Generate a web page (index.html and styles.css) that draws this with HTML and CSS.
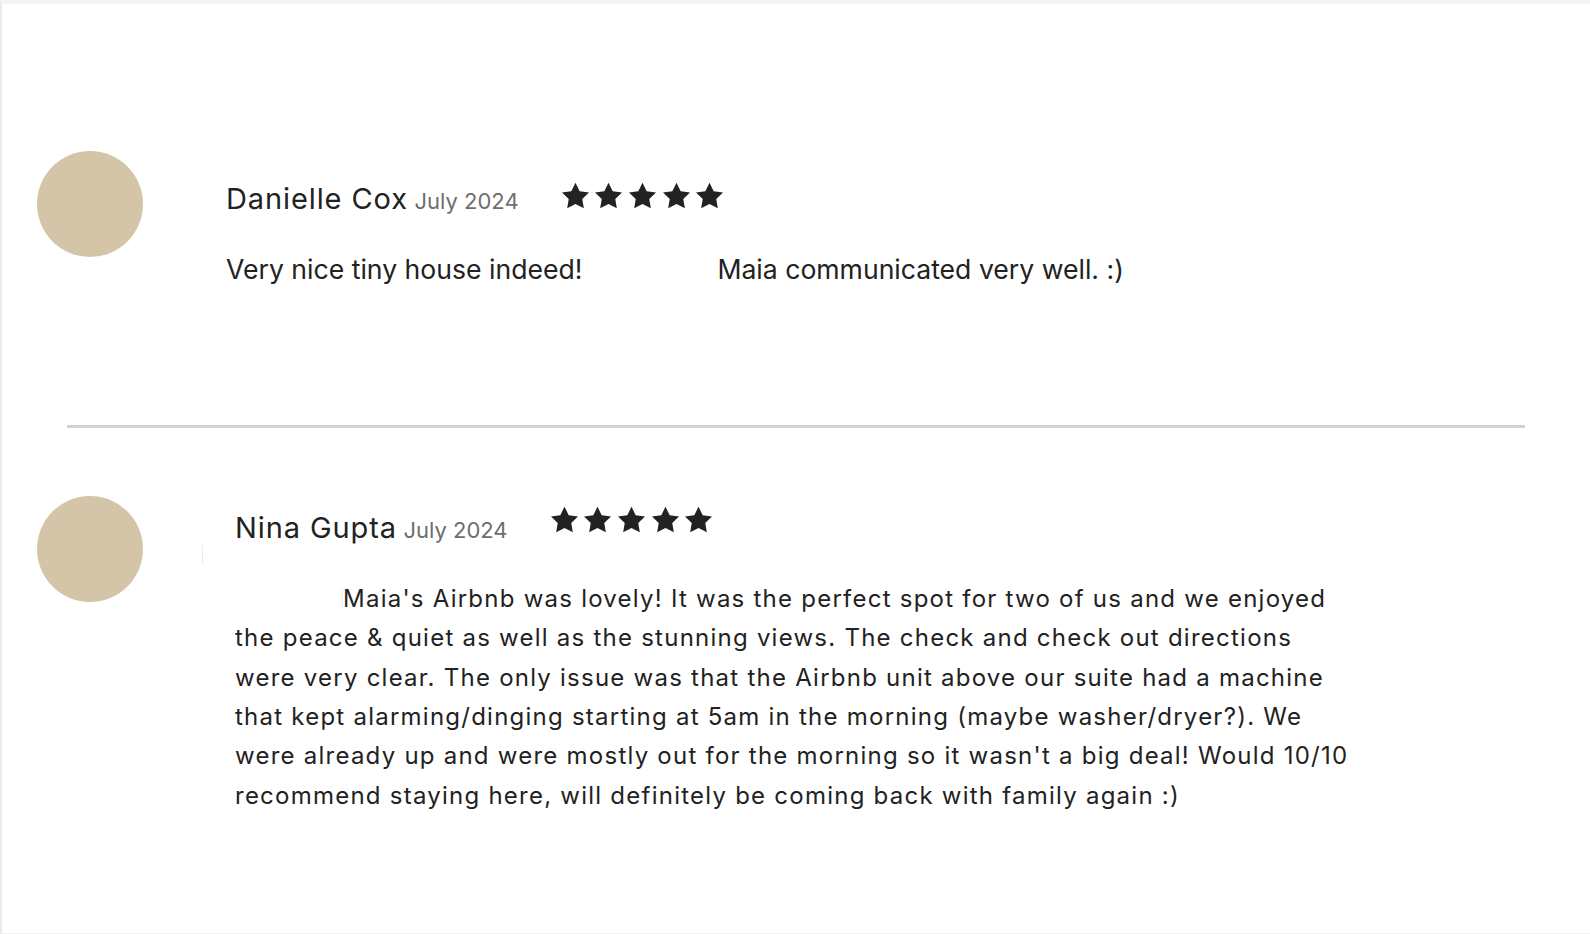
FILE: index.html
```html
<!DOCTYPE html>
<html lang="en">
<head>
<meta charset="utf-8">
<title>Reviews</title>
<link rel="stylesheet" href="styles.css">
</head>
<body>
<main class="page">
  <article class="review review-first">
    <div class="avatar"></div>
    <div class="content content-first">
      <div class="head">
        <div class="who"><span class="name">Danielle Cox</span> <span class="date">July 2024</span></div>
        <div class="stars" aria-label="5 stars">
          <svg viewBox="2 1.5 20 20"><polygon points="12 2 15.09 8.26 22 9.27 17 14.14 18.18 21.02 12 17.77 5.82 21.02 7 14.14 2 9.27 8.91 8.26"/></svg>
          <svg viewBox="2 1.5 20 20"><polygon points="12 2 15.09 8.26 22 9.27 17 14.14 18.18 21.02 12 17.77 5.82 21.02 7 14.14 2 9.27 8.91 8.26"/></svg>
          <svg viewBox="2 1.5 20 20"><polygon points="12 2 15.09 8.26 22 9.27 17 14.14 18.18 21.02 12 17.77 5.82 21.02 7 14.14 2 9.27 8.91 8.26"/></svg>
          <svg viewBox="2 1.5 20 20"><polygon points="12 2 15.09 8.26 22 9.27 17 14.14 18.18 21.02 12 17.77 5.82 21.02 7 14.14 2 9.27 8.91 8.26"/></svg>
          <svg viewBox="2 1.5 20 20"><polygon points="12 2 15.09 8.26 22 9.27 17 14.14 18.18 21.02 12 17.77 5.82 21.02 7 14.14 2 9.27 8.91 8.26"/></svg>
        </div>
      </div>
      <div class="short">
        <span>Very nice tiny house indeed!</span>
        <span>Maia communicated very well. :)</span>
      </div>
    </div>
  </article>

  <hr class="divider">

  <article class="review review-second">
    <div class="avatar"></div>
    <span class="tick"></span>
    <div class="content content-second">
      <div class="head">
        <div class="who"><span class="name">Nina Gupta</span> <span class="date">July 2024</span></div>
        <div class="stars" aria-label="5 stars">
          <svg viewBox="2 1.5 20 20"><polygon points="12 2 15.09 8.26 22 9.27 17 14.14 18.18 21.02 12 17.77 5.82 21.02 7 14.14 2 9.27 8.91 8.26"/></svg>
          <svg viewBox="2 1.5 20 20"><polygon points="12 2 15.09 8.26 22 9.27 17 14.14 18.18 21.02 12 17.77 5.82 21.02 7 14.14 2 9.27 8.91 8.26"/></svg>
          <svg viewBox="2 1.5 20 20"><polygon points="12 2 15.09 8.26 22 9.27 17 14.14 18.18 21.02 12 17.77 5.82 21.02 7 14.14 2 9.27 8.91 8.26"/></svg>
          <svg viewBox="2 1.5 20 20"><polygon points="12 2 15.09 8.26 22 9.27 17 14.14 18.18 21.02 12 17.77 5.82 21.02 7 14.14 2 9.27 8.91 8.26"/></svg>
          <svg viewBox="2 1.5 20 20"><polygon points="12 2 15.09 8.26 22 9.27 17 14.14 18.18 21.02 12 17.77 5.82 21.02 7 14.14 2 9.27 8.91 8.26"/></svg>
        </div>
      </div>
      <p class="long"><span class="indent"></span>Maia's Airbnb was lovely! It was the perfect spot for two of us and we enjoyed<br>the peace &amp; quiet as well as the stunning views. The check and check out directions<br>were very clear. The only issue was that the Airbnb unit above our suite had a machine<br>that kept alarming/dinging starting at 5am in the morning (maybe washer/dryer?). We<br>were already up and were mostly out for the morning so it wasn't a big deal! Would 10/10<br>recommend staying here, will definitely be coming back with family again :)</p>
    </div>
  </article>
</main>
</body>
</html>
```

FILE: styles.css
```css
html, body {
  margin: 0;
  padding: 0;
  background: #ffffff;
}

body {
  font-family: "Inter", "Noto Sans", sans-serif;
  color: #222222;
}

.page {
  box-sizing: border-box;
  width: 1590px;
  height: 934px;
  border-top: 4px solid #f4f4f4;
  border-left: 2px solid #ebebeb;
  border-bottom: 1px solid #f2f2f2;
  overflow: hidden;
}

.review {
  display: flex;
  align-items: flex-start;
  padding-left: 35px;
}

.review-first {
  padding-top: 147px;
}

.review-second {
  margin-top: 68px;
}

.avatar {
  flex: none;
  width: 106px;
  height: 106px;
  border-radius: 50%;
  background: #d4c5a9;
}

.tick {
  flex: none;
  width: 1px;
  height: 19px;
  margin: 49px 0 0 59px;
  background: #eeebe4;
}

.content-first {
  margin-left: 83px;
  margin-top: 30px;
}

.content-second {
  margin-left: 32px;
  margin-top: 14px;
}

.head {
  display: flex;
  align-items: center;
  height: 40px;
}

.who {
  line-height: 40px;
  white-space: nowrap;
}

.name {
  font-size: 29px;
  letter-spacing: 0.9px;
}

.date {
  font-size: 22px;
  line-height: 1;
  margin-left: 2px;
  color: #6e6e6e;
}

.stars {
  display: flex;
  gap: 6.7px;
  margin-left: 43px;
  margin-bottom: 11px;
}

.content-second .stars {
  margin-bottom: 21px;
}

.stars svg {
  width: 27px;
  height: 27px;
  fill: #222222;
}

.short {
  display: flex;
  gap: 135px;
  margin-top: 28px;
  font-size: 26.6px;
  line-height: 40px;
  white-space: nowrap;
}

.long {
  margin: 29px 0 0;
  font-size: 24px;
  line-height: 39.35px;
  letter-spacing: 1.24px;
  white-space: nowrap;
}

.indent {
  display: inline-block;
  width: 107px;
  height: 20px;
  border-right: 1px solid #efefef;
  vertical-align: -2px;
}

.divider {
  display: block;
  margin: 136px 0 0 65px;
  width: 1458px;
  height: 3px;
  border: 0;
  background: #d3d3d3;
}
```
